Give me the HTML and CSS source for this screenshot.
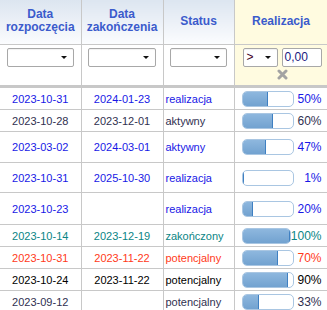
FILE: index.html
```html
<!DOCTYPE html>
<html lang="pl">
	<head>
		<meta charset="UTF-8" />
		<meta name="viewport" content="width=device-width, initial-scale=1.0" />
		<title>Projekty</title>
		<link rel="stylesheet" href="styles.css">
	</head>
	<body>
		<table class="grid">
			<colgroup>
				<col class="c-start">
				<col class="c-end">
				<col class="c-status">
				<col class="c-real">
			</colgroup>
			<thead>
				<tr class="titles">
					<th>Data<br>rozpoczęcia</th>
					<th>Data<br>zakończenia</th>
					<th>Status</th>
					<th class="real">Realizacja</th>
				</tr>
				<tr class="filters">
					<td><div class="combo"><span class="arrow"></span></div></td>
					<td><div class="combo"><span class="arrow"></span></div></td>
					<td><div class="combo"><span class="arrow"></span></div></td>
					<td class="real">
						<div class="num-filter">
							<div class="combo op">&gt;<span class="arrow"></span></div>
							<div class="numbox">0,00</div>
						</div>
						<svg class="clear" width="11" height="11" viewBox="0 0 11 11">
							<path d="M2 2 L9 9 M9 2 L2 9" stroke="#a3a3a3" stroke-width="3" stroke-linecap="round" />
						</svg>
					</td>
				</tr>
			</thead>
			<tbody>
				<tr class="row blue">
					<td class="date">2023-10-31</td>
					<td class="date">2024-01-23</td>
					<td class="status">realizacja</td>
					<td><div class="prog"><div class="bar"><div class="fill" style="width: 50%"></div></div><span class="pct">50%</span></div></td>
				</tr>
				<tr class="row dark">
					<td class="date">2023-10-28</td>
					<td class="date">2023-12-01</td>
					<td class="status">aktywny</td>
					<td><div class="prog"><div class="bar"><div class="fill" style="width: 60%"></div></div><span class="pct">60%</span></div></td>
				</tr>
				<tr class="row blue tall">
					<td class="date">2023-03-02</td>
					<td class="date">2024-03-01</td>
					<td class="status">aktywny</td>
					<td><div class="prog"><div class="bar"><div class="fill" style="width: 47%"></div></div><span class="pct">47%</span></div></td>
				</tr>
				<tr class="row blue tall2">
					<td class="date">2023-10-31</td>
					<td class="date">2025-10-30</td>
					<td class="status">realizacja</td>
					<td><div class="prog"><div class="bar"><div class="fill" style="width: 1%"></div></div><span class="pct">1%</span></div></td>
				</tr>
				<tr class="row blue tall3">
					<td class="date">2023-10-23</td>
					<td class="date"></td>
					<td class="status">realizacja</td>
					<td><div class="prog"><div class="bar"><div class="fill" style="width: 20%"></div></div><span class="pct">20%</span></div></td>
				</tr>
				<tr class="row teal">
					<td class="date">2023-10-14</td>
					<td class="date">2023-12-19</td>
					<td class="status">zakończony</td>
					<td><div class="prog"><div class="bar"><div class="fill" style="width: 100%"></div></div><span class="pct">100%</span></div></td>
				</tr>
				<tr class="row red">
					<td class="date">2023-10-31</td>
					<td class="date">2023-11-22</td>
					<td class="status">potencjalny</td>
					<td><div class="prog"><div class="bar"><div class="fill" style="width: 70%"></div></div><span class="pct">70%</span></div></td>
				</tr>
				<tr class="row black">
					<td class="date">2023-10-24</td>
					<td class="date">2023-11-22</td>
					<td class="status">potencjalny</td>
					<td><div class="prog"><div class="bar"><div class="fill" style="width: 90%"></div></div><span class="pct">90%</span></div></td>
				</tr>
				<tr class="row dark">
					<td class="date">2023-09-12</td>
					<td class="date"></td>
					<td class="status">potencjalny</td>
					<td><div class="prog"><div class="bar"><div class="fill" style="width: 33%"></div></div><span class="pct">33%</span></div></td>
				</tr>
			</tbody>
		</table>
	</body>
</html>
```

FILE: styles.css
```css
body {
	margin: 0;
	font-family: "Liberation Sans", Arial, sans-serif;
	font-size: 11px;
	background: #fff;
	overflow: hidden;
}

.grid {
	border-collapse: collapse;
	table-layout: fixed;
	width: 328px;
}

.c-start { width: 81px; }
.c-end { width: 82px; }
.c-status { width: 71px; }
.c-real { width: 94px; }

.grid th,
.grid td {
	border: 1px solid #c8c8c8;
	padding: 0;
}

.grid tr:first-child th {
	border-top: none;
}

.grid th:first-child,
.grid td:first-child {
	border-left: none;
}

.titles th {
	height: 42px;
	padding-bottom: 2px;
	background: linear-gradient(#dce5f0, #fbfcfe);
	color: #3b5bcc;
	font-size: 12px;
	font-weight: bold;
	line-height: 13px;
	text-align: center;
	vertical-align: middle;
}

.filters td {
	height: 37px;
	border-bottom: 3px solid #c8c8c8;
	vertical-align: top;
	padding-top: 3px;
	background: #fff;
}

.titles th.real,
.filters td.real {
	background: #fffbe0;
}

.combo {
	position: relative;
	box-sizing: border-box;
	width: calc(100% - 13px);
	height: 19px;
	margin: 0 auto;
	border: 1px solid #a8a8a8;
	border-radius: 2px;
	background: #fff;
	box-shadow: inset 0 1px 1px rgba(0, 0, 0, 0.06);
}

.arrow {
	position: absolute;
	right: 6px;
	top: 7px;
	width: 0;
	height: 0;
	border-left: 3px solid transparent;
	border-right: 3px solid transparent;
	border-top: 3px solid #111;
}

.num-filter {
	display: flex;
	gap: 4px;
	padding-left: 8px;
}

.combo.op {
	width: 35px;
	margin: 0;
	padding-left: 3px;
	line-height: 17px;
	font-size: 12px;
	color: #400020;
}

.numbox {
	box-sizing: border-box;
	width: 40px;
	height: 19px;
	padding-left: 2px;
	border: 1px solid #a8a8a8;
	border-radius: 2px;
	background: #fff;
	line-height: 17px;
	font-size: 12px;
	color: #1a1a80;
}

.clear {
	display: block;
	margin: 2px 0 0 42px;
}

.row td {
	height: 21px;
	vertical-align: middle;
}

.row.tall td { height: 30px; }
.row.tall2 td { height: 29px; }
.row.tall3 td { height: 31px; }

.date {
	text-align: center;
}

.status {
	padding-left: 2px !important;
	white-space: nowrap;
}

.blue { color: #1818e6; }
.dark { color: #303050; }
.teal { color: #0a8585; }
.red { color: #ff3a1a; }
.black { color: #000; }

.prog {
	display: flex;
	align-items: center;
	padding: 0 6px 0 7px;
}

.bar {
	box-sizing: border-box;
	width: 52px;
	height: 16px;
	border: 1px solid #a9c6e2;
	border-radius: 5px;
	background: #fff;
	overflow: hidden;
}

.fill {
	box-sizing: border-box;
	height: 100%;
	background: linear-gradient(#8eb7de, #72a2d0);
	border-right: 1px solid #3f80c2;
}

.pct {
	margin-left: auto;
	font-size: 12px;
}
```
